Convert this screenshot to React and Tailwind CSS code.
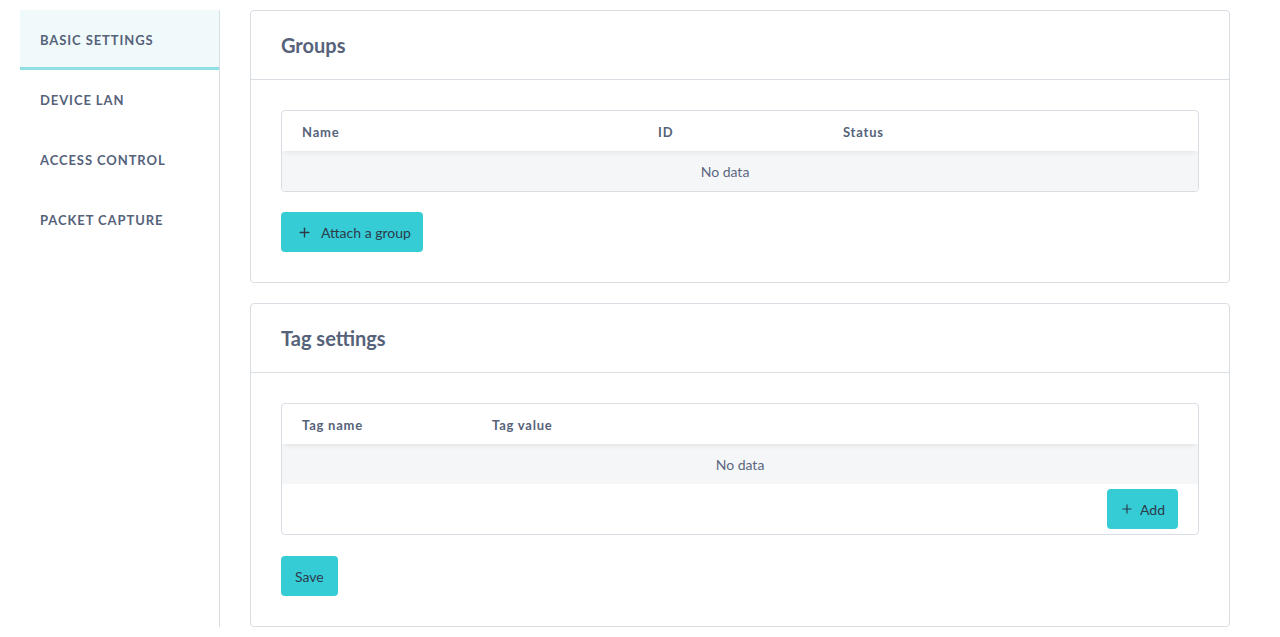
import { Plus } from "lucide-react";

const navItems = ["BASIC SETTINGS", "DEVICE LAN", "ACCESS CONTROL", "PACKET CAPTURE"];

function TableHead({ cols }) {
  return (
    <div className="relative flex h-10 items-center pt-[3px] text-[13px] font-bold tracking-[0.06em] text-[#56627a] shadow-[0_3px_6px_-2px_rgba(0,0,0,0.09)]">
      {cols.map((c) => (
        <div key={c.label} className={`${c.w} pl-5`}>
          {c.label}
        </div>
      ))}
    </div>
  );
}

function EmptyRow({ offset = "" }) {
  return (
    <div className={`flex h-10 items-center justify-center bg-[#f5f6f8] text-[14px] text-[#5b6780] ${offset}`}>
      No data
    </div>
  );
}

function Card({ title, children }) {
  return (
    <div className="rounded-[4px] border border-[#d9dee5] bg-white">
      <div className="flex h-[69px] items-center border-b border-[#d9dee5] px-[30px]">
        <h2 className="text-[20px] font-bold text-[#56627a]">{title}</h2>
      </div>
      <div className="px-[30px] pt-[30px] pb-[30px]">{children}</div>
    </div>
  );
}

export default function App() {
  return (
    <div
      className="flex bg-white px-5 pt-[10px]"
      style={{ fontFamily: "Lato, 'Liberation Sans', sans-serif" }}
    >
      {/* SIDEBAR */}
      <div className="w-[200px] shrink-0 border-r border-[#d9dee5]">
        {navItems.map((item, i) => (
          <div
            key={item}
            className={`flex h-[60px] items-center pl-5 text-[13px] font-bold tracking-[0.07em] text-[#56627a] ${
              i === 0 ? "h-[57px] border-b-[3px] border-[#8fe0e6] bg-[#f0fafb] pt-[4px]" : "pt-[2px]"
            }`}
          >
            {item}
          </div>
        ))}
      </div>

      {/* CONTENT */}
      <div className="flex w-[1010px] flex-col gap-5 pl-[30px]">
        <Card title="Groups">
          <div className="overflow-hidden rounded-[4px] border border-[#d9dee5]">
            <TableHead
              cols={[
                { label: "Name", w: "w-[356px]" },
                { label: "ID", w: "w-[185px]" },
                { label: "Status", w: "flex-1" },
              ]}
            />
            <EmptyRow offset="pr-[30px]" />
          </div>
          <button className="mt-5 flex h-10 items-center gap-[9px] rounded-[4px] bg-[#35ccd6] pl-4 pr-[12px] text-[14px] text-[#2d3a4a]">
            <Plus size={15} strokeWidth={2.2} />
            Attach a group
          </button>
        </Card>

        <Card title="Tag settings">
          <div className="overflow-hidden rounded-[4px] border border-[#d9dee5]">
            <TableHead
              cols={[
                { label: "Tag name", w: "w-[190px]" },
                { label: "Tag value", w: "flex-1" },
              ]}
            />
            <EmptyRow />
            <div className="flex justify-end px-5 py-[5px]">
              <button className="flex h-10 items-center gap-[6px] rounded-[4px] bg-[#35ccd6] px-[13px] text-[14px] text-[#2d3a4a]">
                <Plus size={14} strokeWidth={2} />
                Add
              </button>
            </div>
          </div>
          <button className="mt-[21px] flex h-10 items-center rounded-[4px] bg-[#35ccd6] px-[14px] text-[14px] text-[#2d3a4a]">
            Save
          </button>
        </Card>
      </div>
    </div>
  );
}
